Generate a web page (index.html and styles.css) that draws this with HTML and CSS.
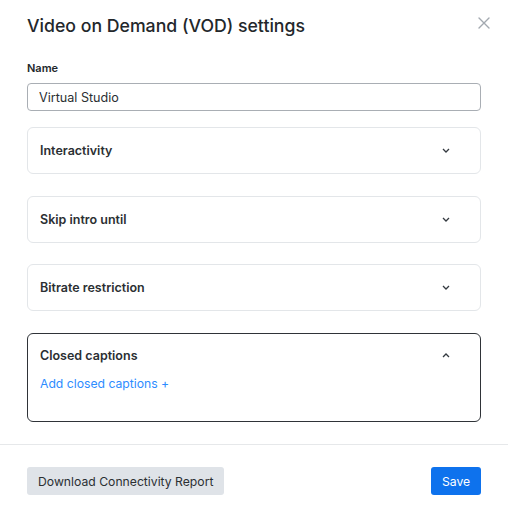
FILE: index.html
```html
<!DOCTYPE html>
<html>
<head>
<meta charset="utf-8">
<link rel="stylesheet" href="styles.css">
</head>
<body>
<div class="modal">
  <div class="modal-header">
    <h1 class="title">Video on Demand (VOD) settings</h1>
    <button class="close" aria-label="Close">
      <svg width="12" height="12" viewBox="0 0 12 12"><path d="M1 1L11 11M11 1L1 11" stroke="#a3a9b0" stroke-width="1.4" fill="none" stroke-linecap="round"/></svg>
    </button>
  </div>
  <div class="modal-body">
    <label class="label">Name</label>
    <input class="input" type="text" value="Virtual Studio">
    <div class="accordion">
      <div class="acc-head"><span>Interactivity</span>
        <svg class="chev" width="8" height="5" viewBox="0 0 8 5"><path d="M1 1L4 4L7 1" stroke="#343a40" stroke-width="1.3" fill="none"/></svg>
      </div>
    </div>
    <div class="accordion">
      <div class="acc-head"><span>Skip intro until</span>
        <svg class="chev" width="8" height="5" viewBox="0 0 8 5"><path d="M1 1L4 4L7 1" stroke="#343a40" stroke-width="1.3" fill="none"/></svg>
      </div>
    </div>
    <div class="accordion">
      <div class="acc-head"><span>Bitrate restriction</span>
        <svg class="chev" width="8" height="5" viewBox="0 0 8 5"><path d="M1 1L4 4L7 1" stroke="#343a40" stroke-width="1.3" fill="none"/></svg>
      </div>
    </div>
    <div class="accordion open">
      <div class="acc-head"><span>Closed captions</span>
        <svg class="chev" width="8" height="5" viewBox="0 0 8 5"><path d="M1 4L4 1L7 4" stroke="#343a40" stroke-width="1.3" fill="none"/></svg>
      </div>
      <div class="acc-body"><a class="link" href="#">Add closed captions +</a></div>
    </div>
  </div>
  <div class="modal-footer">
    <button class="btn btn-secondary">Download Connectivity Report</button>
    <button class="btn btn-primary">Save</button>
  </div>
</div>
</body>
</html>
```
FILE: styles.css
```css
* { box-sizing: border-box; }
body {
  margin: 0;
  background: #fff;
  font-family: Inter, "Noto Sans", sans-serif;
  color: #23272b;
}
.modal { width: 508px; }
.modal-header {
  display: flex;
  justify-content: space-between;
  align-items: flex-start;
  padding: 12px 18px 0 27px;
}
.title {
  margin: 0;
  font-size: 17.7px;
  font-weight: 500;
  line-height: 28px;
  color: #23272b;
}
.close {
  border: 0;
  background: none;
  padding: 0;
  margin-top: 5px;
  width: 12px;
  height: 12px;
  display: flex;
}
.modal-body {
  padding: 0 27px 22px;
  display: flex;
  flex-direction: column;
}
.label {
  margin-top: 21px;
  font-size: 11px;
  font-weight: 600;
  line-height: 14px;
  color: #23272b;
}
.input {
  margin-top: 8px;
  height: 28px;
  border: 1px solid #a9aeb4;
  border-radius: 4px;
  padding: 0 11px;
  font: inherit;
  font-size: 12.6px;
  color: #2b2f33;
  outline: none;
}
.accordion {
  margin-top: 16px;
  border: 1px solid #e3e6e9;
  border-radius: 6px;
}
.accordion + .accordion { margin-top: 21.7px; }
.accordion.open {
  border-color: #2f3338;
  min-height: 89px;
}
.acc-head {
  display: flex;
  justify-content: space-between;
  align-items: center;
  height: 45px;
  padding: 0 30px 0 12px;
  font-size: 12.5px;
  font-weight: 600;
  color: #2b2f33;
}
.open .acc-head { height: 43px; }
.acc-body { padding: 0 12px 12px; margin-top: -5px; }
.link {
  color: #2d8cff;
  text-decoration: none;
  font-size: 12.2px;
}
.modal-footer {
  border-top: 1px solid #e6e8ea;
  display: flex;
  justify-content: space-between;
  padding: 22px 27px;
}
.btn {
  border: 0;
  border-radius: 3px;
  height: 28px;
  font: inherit;
  font-size: 12.2px;
  padding: 0 11px;
}
.btn-secondary { background: #dfe3e8; color: #2b2f33; }
.btn-primary { background: #0e72ed; color: #fff; width: 50px; padding: 0; }
```
